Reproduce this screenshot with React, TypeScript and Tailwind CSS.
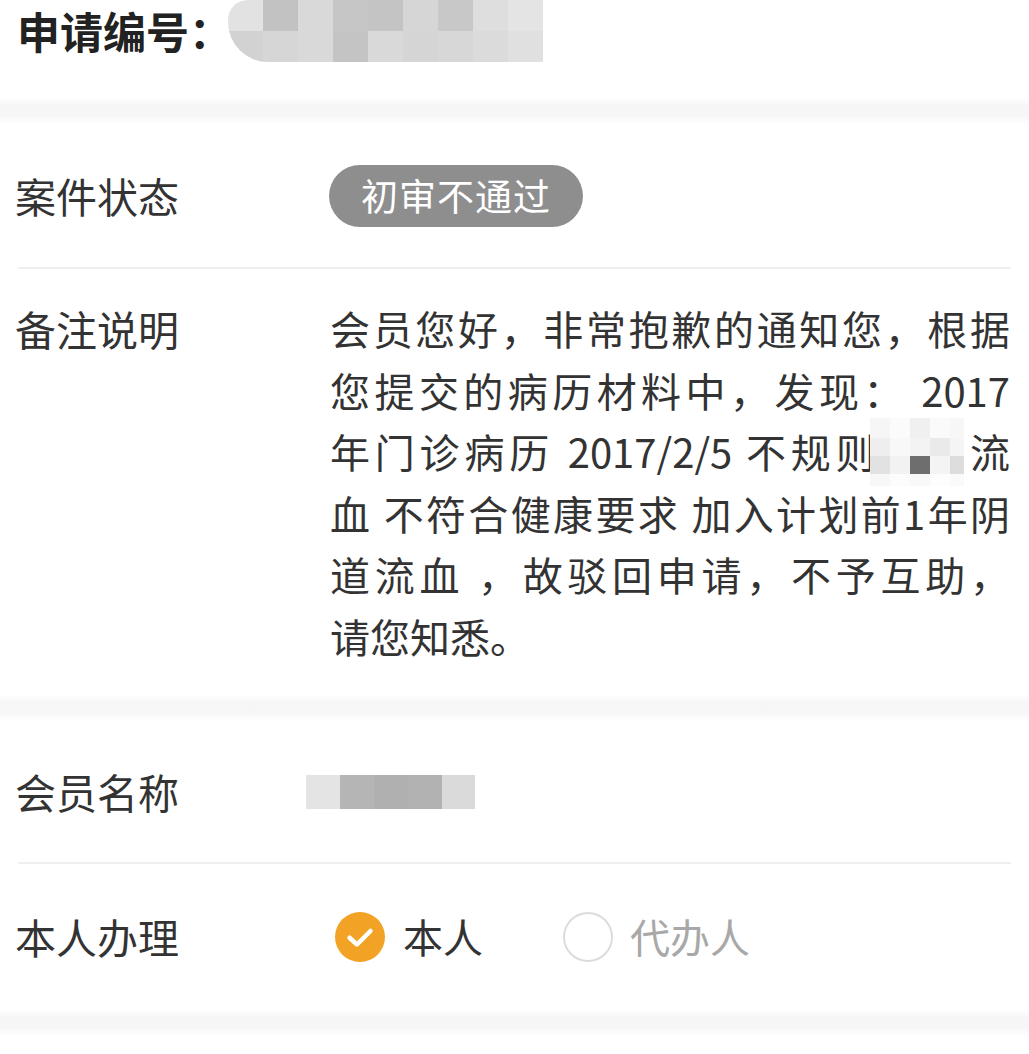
import React from "react";

const headerBlocks: string[][] = [
  ["#e2e2e2", "#c2c2c2", "#d9d9d9", "#c6c6c6", "#c4c4c4", "#d6d6d6", "#c8c8c8", "#dedede", "#e4e4e4"],
  ["#d2d2d2", "#d6d6d6", "#d9d9d9", "#c4c4c4", "#d9d9d9", "#d5d5d5", "#d7d7d7", "#dbdbdb", "#e0e0e0"],
];

function Label({ children }: { children: React.ReactNode }) {
  return (
    <div className="w-[315px] shrink-0 pl-[15px] text-[41px] leading-[61.5px] text-[#333333]">
      {children}
    </div>
  );
}

function Band({ h }: { h: string }) {
  return (
    <div
      className={`${h} w-full bg-[linear-gradient(to_bottom,#ffffff_0%,#f6f6f6_30%,#f7f7f7_70%,#ffffff_100%)]`}
    />
  );
}

export default function App() {
  const lines = [
    "会员您好，非常抱歉的通知您，根据",
    "您提交的病历材料中，发现： 2017",
    "年门诊病历 2017/2/5 不规则阴道流",
    "血 不符合健康要求 加入计划前1年阴",
    "道流血 ，故驳回申请，不予互助，",
  ];
  return (
    <div
      className="w-[1029px] h-[1054px] bg-white overflow-hidden text-[#333333]"
      style={{ fontFamily: '"Noto Sans CJK SC", "Noto Sans", sans-serif' }}
    >
      {/* Header */}
      <div className="h-[98px] flex items-start">
        <div className="pl-[17px] h-[60px] flex items-center text-[43px] font-bold leading-[60px] text-[#222222]">
          申请编号：
        </div>
        <div className="ml-[-4px] flex flex-col rounded-bl-[40px] rounded-tl-[20px] overflow-hidden">
          {headerBlocks.map((row, i) => (
            <div key={i} className="flex">
              {row.map((c, j) => (
                <div
                  key={j}
                  className="w-[35px] h-[31px]"
                  style={{ backgroundColor: c }}
                />
              ))}
            </div>
          ))}
        </div>
      </div>

      <Band h="h-[26px]" />

      {/* 案件状态 */}
      <div className="h-[143px] flex items-center">
        <Label>案件状态</Label>
        <div className="ml-[14px] h-[62px] w-[254px] rounded-full bg-[#8e8e8e] flex items-center justify-center text-white text-[37px] tracking-[1px]">
          初审不通过
        </div>
      </div>
      <div className="mx-[18px] h-[2px] bg-[#efefef]" />

      {/* 备注说明 */}
      <div className="flex pt-[29px] pb-[28px]">
        <Label>备注说明</Label>
        <div className="relative ml-[15px] w-[680px] text-[40px] leading-[61.5px] text-[#333333]">
          {lines.map((l, i) => (
            <div key={i} className="whitespace-nowrap text-justify [text-align-last:justify]">
              {l}
            </div>
          ))}
          <div className="whitespace-nowrap">请您知悉。</div>
          {/* redaction overlay */}
          <div className="absolute left-[540px] top-[120px] flex flex-col">
            <div className="flex">
              <div className="w-[20px] h-[20px] bg-[#f6f6f6]" />
              <div className="w-[20px] h-[20px] bg-[#fbfbfb]" />
              <div className="w-[20px] h-[20px] bg-[#f0f0f0]" />
              <div className="w-[20px] h-[20px] bg-[#fafafa]" />
              <div className="w-[14px] h-[20px] bg-[#f7f7f7]" />
            </div>
            <div className="flex">
              <div className="w-[20px] h-[18px] bg-[#eeeeee]" />
              <div className="w-[20px] h-[18px] bg-[#f8f8f8]" />
              <div className="w-[20px] h-[18px] bg-[#f3f3f3]" />
              <div className="w-[20px] h-[18px] bg-[#eaeaea]" />
              <div className="w-[14px] h-[18px] bg-[#f5f5f5]" />
            </div>
            <div className="flex">
              <div className="w-[20px] h-[18px] bg-[#e2e2e2]" />
              <div className="w-[20px] h-[18px] bg-[#f2f2f2]" />
              <div className="w-[20px] h-[18px] bg-[#6e6e6e]" />
              <div className="w-[20px] h-[18px] bg-[#f4f4f4]" />
              <div className="w-[14px] h-[18px] bg-[#dddddd]" />
            </div>
            <div className="flex">
              <div className="w-[20px] h-[12px] bg-[#f7f7f7]" />
              <div className="w-[20px] h-[12px] bg-[#fcfcfc]" />
              <div className="w-[20px] h-[12px] bg-[#f8f8f8]" />
              <div className="w-[20px] h-[12px] bg-[#fdfdfd]" />
              <div className="w-[14px] h-[12px] bg-[#fafafa]" />
            </div>
          </div>
        </div>
      </div>

      <Band h="h-[26px]" />

      {/* 会员名称 */}
      <div className="h-[141px] flex items-center">
        <Label>会员名称</Label>
        <div className="ml-[-9px] flex h-[34px]">
          <div className="w-[34px] bg-[#e4e4e4]" />
          <div className="w-[34px] bg-[#b5b5b5]" />
          <div className="w-[34px] bg-[#b0b0b0]" />
          <div className="w-[34px] bg-[#b2b2b2]" />
          <div className="w-[33px] bg-[#dadada]" />
        </div>
      </div>
      <div className="mx-[18px] h-[2px] bg-[#efefef]" />

      {/* 本人办理 */}
      <div className="h-[146px] flex items-center">
        <Label>本人办理</Label>
        <div className="ml-[20px] flex items-center">
          <div className="w-[50px] h-[50px] rounded-full bg-[#f2a224] flex items-center justify-center">
            <svg width="36" height="36" viewBox="0 0 24 24" fill="none">
              <path
                d="M5 12.5 L10 17 L19 8"
                stroke="#ffffff"
                strokeWidth="3"
                strokeLinecap="round"
                strokeLinejoin="round"
              />
            </svg>
          </div>
          <span className="ml-[18px] text-[40px] leading-[61.5px] text-[#333333]">本人</span>
          <div className="ml-[80px] w-[50px] h-[50px] rounded-full border-[2px] border-[#dcdcdc]" />
          <span className="ml-[17px] text-[40px] leading-[61.5px] text-[#a8a8a8]">代办人</span>
        </div>
      </div>

      <Band h="h-[26px]" />
    </div>
  );
}
